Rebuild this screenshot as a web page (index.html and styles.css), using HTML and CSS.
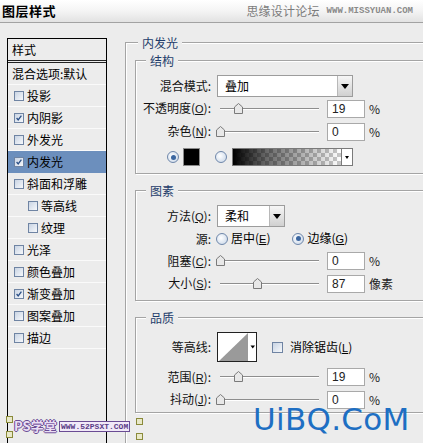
FILE: index.html
```
<!DOCTYPE html>
<html lang="zh-CN">
<head>
<meta charset="utf-8">
<title>图层样式</title>
<link rel="stylesheet" href="styles.css">
</head>
<body>
<div class="titlebar">
  <span class="title">图层样式</span>
  <span class="site"><span class="site-cn">思缘设计论坛</span><span class="site-en">WWW.MISSYUAN.COM</span></span>
</div>
<div class="main">
  <div class="styles-list">
    <div class="list-head">样式</div>
    <div class="list-row blend">混合选项:默认</div>
    <div class="list-row"><span class="cb"></span>投影</div>
    <div class="list-row"><span class="cb on"><svg viewBox="0 0 10 10"><polyline points="2,5 4,7.5 8,2" /></svg></span>内阴影</div>
    <div class="list-row"><span class="cb"></span>外发光</div>
    <div class="list-row selected"><span class="cb on"><svg viewBox="0 0 10 10"><polyline points="2,5 4,7.5 8,2" /></svg></span>内发光</div>
    <div class="list-row"><span class="cb"></span>斜面和浮雕</div>
    <div class="list-row sub"><span class="cb"></span>等高线</div>
    <div class="list-row sub"><span class="cb"></span>纹理</div>
    <div class="list-row"><span class="cb"></span>光泽</div>
    <div class="list-row"><span class="cb"></span>颜色叠加</div>
    <div class="list-row"><span class="cb on"><svg viewBox="0 0 10 10"><polyline points="2,5 4,7.5 8,2" /></svg></span>渐变叠加</div>
    <div class="list-row"><span class="cb"></span>图案叠加</div>
    <div class="list-row"><span class="cb"></span>描边</div>
  </div>

  <div class="panel">
    <div class="group outer">
      <div class="legend outer-legend">内发光</div>

      <div class="group inner g-struct">
        <div class="legend">结构</div>
        <div class="row r22">
          <span class="lbl">混合模式:</span>
          <div class="select wide"><span class="sel-text">叠加</span><span class="sel-arrow"><i></i></span></div>
        </div>
        <div class="row r23">
          <span class="lbl">不透明度(<u>O</u>):</span>
          <div class="slider"><div class="track"></div><span class="thumb" style="left:16.5px"><svg viewBox="0 0 9 11"><polygon points="0.5,4 4.5,0.5 8.5,4 8.5,10.5 0.5,10.5"/></svg></span></div>
          <span class="num">19</span><span class="unit">%</span>
        </div>
        <div class="row r23">
          <span class="lbl">杂色(<u>N</u>):</span>
          <div class="slider"><div class="track"></div><span class="thumb" style="left:-1px"><svg viewBox="0 0 9 11"><polygon points="0.5,4 4.5,0.5 8.5,4 8.5,10.5 0.5,10.5"/></svg></span></div>
          <span class="num">0</span><span class="unit">%</span>
        </div>
        <div class="row r22 color-row">
          <span class="radio on"></span>
          <span class="swatch"></span>
          <span class="radio second"></span>
          <div class="gradbox"><span class="grad"></span><span class="grad-arrow"><i></i></span></div>
        </div>
      </div>

      <div class="group inner g-elem">
        <div class="legend">图素</div>
        <div class="row r22">
          <span class="lbl">方法(<u>Q</u>):</span>
          <div class="select narrow"><span class="sel-text">柔和</span><span class="sel-arrow"><i></i></span></div>
        </div>
        <div class="row r23">
          <span class="lbl">源:</span>
          <span class="radio src"></span><span class="opt">居中(<u>E</u>)</span>
          <span class="radio on src2"></span><span class="opt">边缘(<u>G</u>)</span>
        </div>
        <div class="row r22">
          <span class="lbl">阻塞(<u>C</u>):</span>
          <div class="slider"><div class="track"></div><span class="thumb" style="left:-1px"><svg viewBox="0 0 9 11"><polygon points="0.5,4 4.5,0.5 8.5,4 8.5,10.5 0.5,10.5"/></svg></span></div>
          <span class="num">0</span><span class="unit">%</span>
        </div>
        <div class="row r23">
          <span class="lbl">大小(<u>S</u>):</span>
          <div class="slider"><div class="track"></div><span class="thumb" style="left:35.5px"><svg viewBox="0 0 9 11"><polygon points="0.5,4 4.5,0.5 8.5,4 8.5,10.5 0.5,10.5"/></svg></span></div>
          <span class="num">87</span><span class="unit">像素</span>
        </div>
      </div>

      <div class="group inner g-qual">
        <div class="legend">品质</div>
        <div class="row r30">
          <span class="lbl">等高线:</span>
          <div class="contour">
            <svg viewBox="0 0 38 28" width="38" height="28">
              <rect x="0" y="0" width="38" height="28" fill="#fff"/>
              <polygon points="1,28 30,0 30,28" fill="#9a9a9a"/>
              <polygon points="32.5,12.5 37,12.5 34.75,15.5" fill="#000"/>
            </svg>
          </div>
          <span class="cb big"></span><span class="opt">消除锯齿(<u>L</u>)</span>
        </div>
        <div class="row r22 range-row">
          <span class="lbl">范围(<u>R</u>):</span>
          <div class="slider"><div class="track"></div><span class="thumb" style="left:16.5px"><svg viewBox="0 0 9 11"><polygon points="0.5,4 4.5,0.5 8.5,4 8.5,10.5 0.5,10.5"/></svg></span></div>
          <span class="num">19</span><span class="unit">%</span>
        </div>
        <div class="row r23">
          <span class="lbl">抖动(<u>J</u>):</span>
          <div class="slider"><div class="track"></div><span class="thumb" style="left:-1px"><svg viewBox="0 0 9 11"><polygon points="0.5,4 4.5,0.5 8.5,4 8.5,10.5 0.5,10.5"/></svg></span></div>
          <span class="num">0</span><span class="unit">%</span>
        </div>
      </div>
    </div>
  </div>
</div>

<div class="wm-ps">
  <span class="mark m1"></span><span class="mark m2"></span><span class="mark m3"></span><span class="mark m4"></span>
  <span class="ps-cn">PS学堂</span><span class="ps-en">WWW.52PSXT.COM</span>
</div>
<div class="wm-uibq">UiBQ.CoM</div>
</body>
</html>
```

FILE: styles.css
```
html, body {
  margin: 0;
  padding: 0;
}
body {
  width: 423px;
  height: 443px;
  overflow: hidden;
  position: relative;
  background: #ececec;
  font-family: "Noto Sans CJK SC", "Liberation Sans", sans-serif;
  font-size: 12px;
  color: #000;
}

/* title bar */
.titlebar {
  height: 22px;
  border-bottom: 1px solid #a2a2a2;
  background: linear-gradient(#ffffff, #f4f4f4 50%, #e2e2e2);
  display: flex;
  align-items: center;
}
.title {
  font-weight: bold;
  font-size: 13px;
  line-height: 16px;
  margin-left: 2px;
  letter-spacing: 0.5px;
}
.site {
  margin-left: auto;
  margin-right: 10px;
  display: flex;
  align-items: center;
  color: #7c7c7c;
}
.site-cn {
  font-size: 12px;
  line-height: 16px;
  letter-spacing: 0.2px;
}
.site-en {
  margin-left: 7px;
  font-family: "Liberation Mono", monospace;
  font-size: 9px;
  line-height: 12px;
  font-weight: bold;
  color: #8a8a8a;
}

/* main */
.main {
  display: flex;
  align-items: flex-start;
  padding-top: 15px;
}

.styles-list {
  margin-left: 7px;
  width: 100px;
  height: 420px;
  box-sizing: border-box;
  border: 1px solid #000;
  border-bottom: none;
  flex-shrink: 0;
}
.list-head {
  height: 21px;
  line-height: 21px;
  padding-left: 4px;
  border-bottom: 3px double #222;
}
.list-row {
  height: 21px;
  border-bottom: 1px solid #fafafa;
  display: flex;
  align-items: center;
  padding-left: 6px;
  white-space: nowrap;
  line-height: 16px;
}
.list-row.blend {
  padding-left: 4px;
}
.list-row.sub {
  padding-left: 20px;
}
.list-row.selected {
  background: #6c8fbd;
  border-bottom-color: #6c8fbd;
}

.cb {
  width: 10px;
  height: 10px;
  box-sizing: border-box;
  border: 1px solid #6f84a3;
  background: linear-gradient(135deg, #c9d4e3, #f6f8fb);
  margin-right: 3px;
  display: inline-flex;
  flex-shrink: 0;
}
.cb svg {
  width: 8px;
  height: 8px;
}
.cb polyline {
  fill: none;
  stroke: #2a4f86;
  stroke-width: 1.6;
}
.cb.big {
  width: 11px;
  height: 11px;
  margin-left: 15px;
  margin-right: 4px;
}

/* right panel */
.panel {
  margin-left: 18px;
  margin-top: 4px;
  flex-shrink: 0;
}
.group {
  border: 1px solid #a4a4a4;
  box-shadow: inset 1px 1px 0 #fff, 1px 1px 0 #fff;
}
.outer {
  width: 330px;
  height: 420px;
  border-right: none;
  border-bottom: none;
  padding-left: 9px;
}
.legend {
  margin-top: -8px;
  margin-left: 10px;
  height: 15px;
  line-height: 15px;
  padding: 0 4px;
  width: fit-content;
  background: #ececec;
  color: #1f3d6b;
  margin-bottom: 7px;
  font-size: 12px;
}
.outer-legend {
  margin-left: 3px;
  margin-bottom: 0;
}
.inner {
  width: 320px;
  border-right: none;
}
.g-struct {
  margin-top: 10px;
  padding-bottom: 5px;
}
.g-elem {
  margin-top: 16px;
  padding-bottom: 5px;
}
.g-qual {
  margin-top: 16px;
  padding-bottom: 1px;
}

.row {
  display: flex;
  align-items: center;
  white-space: nowrap;
  line-height: 16px;
}
.r22 { height: 22px; }
.r23 { height: 23px; }
.r30 { height: 30px; }
.range-row { margin-top: 4px; }
.color-row {
  margin-top: 3px;
  padding-left: 31px;
}
.lbl {
  width: 75px;
  margin-right: 6px;
  text-align: right;
  flex-shrink: 0;
  color: #111;
}
u {
  text-decoration: underline;
  text-underline-offset: 1px;
  font-family: "Liberation Sans", sans-serif;
  font-size: 11px;
}

/* select */
.select {
  height: 22px;
  box-sizing: border-box;
  border: 1px solid #9c9c9c;
  background: #fff;
  display: flex;
  align-items: stretch;
}
.select.wide { width: 136px; }
.select.narrow { width: 68px; }
.sel-text {
  flex: 1;
  padding-left: 7px;
  line-height: 20px;
}
.sel-arrow {
  width: 14px;
  border-left: 1px solid #b8b8b8;
  background: linear-gradient(#f6f6f6, #d0d0d0);
  display: flex;
  align-items: center;
  justify-content: center;
}
.sel-arrow i {
  width: 0;
  height: 0;
  border-left: 4px solid transparent;
  border-right: 4px solid transparent;
  border-top: 5px solid #000;
}

/* slider */
.slider {
  position: relative;
  width: 105px;
  height: 14px;
  display: flex;
  align-items: center;
  flex-shrink: 0;
}
.track {
  flex: 1;
  margin: 0 3px;
  border-top: 1px solid #8e8e8e;
  border-bottom: 1px solid #ffffff;
}
.thumb {
  position: absolute;
  top: 1px;
  width: 9px;
  height: 11px;
}
.thumb svg {
  display: block;
  width: 9px;
  height: 11px;
}
.thumb polygon {
  fill: #e8e8e8;
  stroke: #7a7a7a;
  stroke-width: 1;
}

.num {
  margin-left: 5px;
  width: 38px;
  height: 18px;
  box-sizing: border-box;
  border: 1px solid #a9a9a9;
  background: #fff;
  padding-left: 4px;
  font-family: "Liberation Sans", sans-serif;
  font-size: 12px;
  line-height: 16px;
  color: #222;
}
.unit {
  margin-left: 4px;
  color: #222;
}

/* radios */
.radio {
  width: 12px;
  height: 12px;
  box-sizing: border-box;
  border-radius: 50%;
  border: 1px solid #6f87aa;
  background: radial-gradient(circle at 40% 40%, #ffffff, #c4d3e6);
  flex-shrink: 0;
  position: relative;
}
.radio.on::after {
  content: "";
  position: absolute;
  left: 2.5px;
  top: 2.5px;
  width: 5px;
  height: 5px;
  border-radius: 50%;
  background: #3b66a0;
}
.radio.second { margin-left: 15px; }
.radio.src { margin-left: -1px; }
.radio.src2 { margin-left: 22px; }
.opt { margin-left: 3px; }

.swatch {
  margin-left: 4px;
  width: 17px;
  height: 18px;
  box-sizing: border-box;
  border: 1px solid #8a8a8a;
  background: #000;
}
.gradbox {
  margin-left: 5px;
  width: 121px;
  height: 18px;
  box-sizing: border-box;
  border: 1px solid #7a7a7a;
  display: flex;
  background: #fff;
}
.grad {
  flex: 1;
  background:
    linear-gradient(90deg, #000 0%, rgba(0,0,0,0.6) 30%, rgba(0,0,0,0) 100%),
    conic-gradient(#c8c8c8 25%, #fff 0 50%, #c8c8c8 0 75%, #fff 0) 0 0 / 8px 8px;
}
.grad-arrow {
  width: 10px;
  border-left: 1px solid #7a7a7a;
  background: #fff;
  display: flex;
  align-items: center;
  justify-content: center;
}
.grad-arrow i {
  width: 0;
  height: 0;
  border-left: 2.5px solid transparent;
  border-right: 2.5px solid transparent;
  border-top: 3px solid #000;
}

.contour {
  width: 40px;
  height: 30px;
  box-sizing: border-box;
  border: 1px solid #222;
  background: #fff;
}
.contour svg {
  display: block;
}

/* watermarks (overlays) */
.wm-ps {
  position: absolute;
  left: 5px;
  top: 415px;
  width: 140px;
  height: 22px;
}
.mark {
  position: absolute;
  width: 5px;
  height: 5px;
  border: 1px solid #8a8a3a;
  background: #e8e8c8;
}
.m1 { left: 1px; top: 1px; }
.m2 { left: 1px; top: 16px; }
.m3 { left: 131px; top: 3px; }
.m4 { left: 131px; top: 18px; }
.ps-cn {
  position: absolute;
  left: 9px;
  top: 3px;
  font-size: 13px;
  line-height: 15px;
  font-weight: bold;
  color: #eadff4;
  text-shadow: 1px 0 #6a4c94, -1px 0 #6a4c94, 0 1px #6a4c94, 0 -1px #6a4c94;
}
.ps-en {
  position: absolute;
  left: 54px;
  top: 6px;
  padding: 0 1px;
  border: 1px solid #6a4c94;
  background: #f1e9f8;
  font-family: "Liberation Mono", monospace;
  font-size: 8px;
  line-height: 9px;
  font-weight: bold;
  color: #5b3d87;
}
.wm-uibq {
  position: absolute;
  left: 253px;
  top: 409px;
  font-family: "DejaVu Sans", "Liberation Sans", sans-serif;
  font-size: 31px;
  line-height: 20px;
  color: #1e6fc3;
  letter-spacing: 0.3px;
}
```
